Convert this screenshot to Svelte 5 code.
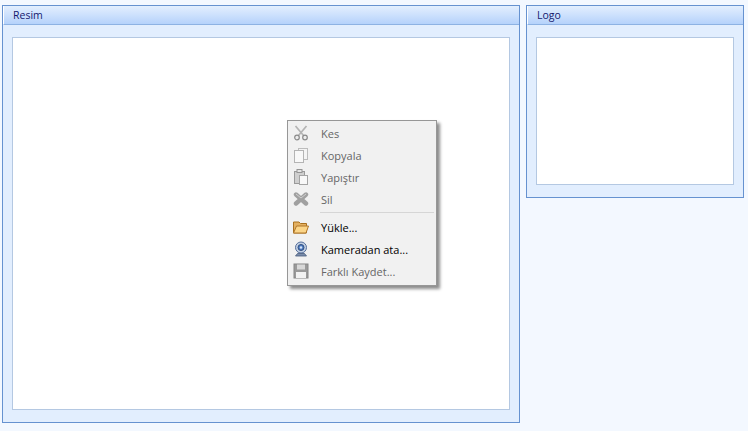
<script lang="ts">
  const items = [
    { label: "Kes", icon: "cut", disabled: true },
    { label: "Kopyala", icon: "copy", disabled: true },
    { label: "Yapıştır", icon: "paste", disabled: true },
    { label: "Sil", icon: "del", disabled: true },
    { sep: true },
    { label: "Yükle...", icon: "open", disabled: false },
    { label: "Kameradan ata...", icon: "cam", disabled: false },
    { label: "Farklı Kaydet...", icon: "save", disabled: true },
  ];
</script>

<div class="page">
  <section class="panel main">
    <header><span>Resim</span></header>
    <div class="body"><div class="picture"></div></div>
  </section>
  <section class="panel logo">
    <header><span>Logo</span></header>
    <div class="body"><div class="picture"></div></div>
  </section>

  <div class="menu">
    {#each items as item}
      {#if item.sep}
        <div class="sep"></div>
      {:else}
        <div class="item" class:disabled={item.disabled}>
          <span class="icon">
            <svg width="16" height="16" viewBox="0 0 16 16">
              {#if item.icon === "cut"}
                <path d="M2.5 1 L10.5 10.5 M13.5 1 L5.5 10.5" stroke="#b4b4b4" stroke-width="1.7" fill="none" />
                <circle cx="4" cy="12.5" r="2.3" fill="#ececec" stroke="#8a8a8a" stroke-width="1.2" />
                <circle cx="12" cy="12.5" r="2.3" fill="#ececec" stroke="#8a8a8a" stroke-width="1.2" />
              {:else if item.icon === "copy"}
                <rect x="5.5" y="1.5" width="9" height="11" fill="#f4f4f4" stroke="#bcbcbc" />
                <rect x="1.5" y="3.5" width="9" height="12" fill="#f8f8f8" stroke="#b4b4b4" />
              {:else if item.icon === "paste"}
                <rect x="1.5" y="2.5" width="10" height="12" fill="#cfcfcf" stroke="#9a9a9a" />
                <rect x="4" y="0.5" width="5" height="3" fill="#e4e4e4" stroke="#939393" />
                <rect x="6.5" y="6.5" width="8" height="9" fill="#f8f8f8" stroke="#a4a4a4" />
              {:else if item.icon === "del"}
                <path d="M3 3.5 L13 12.5 M13 3.5 L3 12.5" stroke="#a0a0a0" stroke-width="4.4" stroke-linecap="round" />
                <path d="M3 3 L8 7 L13 3" stroke="#cfcfcf" stroke-width="1" fill="none" />
              {:else if item.icon === "open"}
                <path d="M0.5 14 V3 H6 L7.5 4.5 H13.5 V14 Z" fill="#e3b061" stroke="#a9701e" />
                <path d="M0.5 14 L3.5 7 H15.5 L13 14 Z" fill="#fbd588" stroke="#b0762a" />
              {:else if item.icon === "cam"}
                <circle cx="8" cy="6.5" r="5.5" fill="#c2cfe2" stroke="#556f9c" />
                <circle cx="8" cy="6.5" r="3" fill="#4a79c0" stroke="#33507f" />
                <circle cx="8" cy="6.5" r="1.2" fill="#d6e4f8" />
                <path d="M2.5 15 L4.5 12.5 H11.5 L13.5 15 Z" fill="#7a8cab" stroke="#485c7c" stroke-width="0.8" />
              {:else if item.icon === "save"}
                <rect x="1" y="1" width="14" height="14" fill="#9a9a9a" stroke="#868686" />
                <rect x="4" y="1.5" width="8" height="5" fill="#d8d8d8" />
                <rect x="3" y="9" width="10" height="6" fill="#f2f2f2" />
              {/if}
            </svg>
          </span>
          <span class="label">{item.label}</span>
        </div>
      {/if}
    {/each}
  </div>
</div>

<style>
  :global(body) {
    margin: 0;
    background: #f3f8ff;
  }

  .page {
    position: relative;
    display: flex;
    align-items: flex-start;
    gap: 6px;
    width: 748px;
    height: 431px;
    box-sizing: border-box;
    padding: 5px 4px 0 2px;
    overflow: hidden;
    font-family: "Open Sans", "Noto Sans", sans-serif;
    font-size: 11px;
  }

  .panel {
    box-sizing: border-box;
    border: 1px solid #6692d0;
    background: #e2eefe;
    display: flex;
    flex-direction: column;
  }

  .main {
    width: 518px;
    height: 418px;
  }

  .logo {
    width: 218px;
    height: 193px;
  }

  header {
    box-sizing: border-box;
    height: 19px;
    padding-left: 9px;
    line-height: 18px;
    font-size: 10.5px;
    color: #15196e;
    border-left: 1px solid #fff;
    border-bottom: 1px solid #8db2e3;
    background: linear-gradient(180deg, #e3effe 0%, #cfe2fd 45%, #b5d2fb 100%);
  }

  .body {
    flex: 1;
    display: flex;
    padding: 12px 9px;
    min-height: 0;
    background: #e2eefe;
  }

  .picture {
    flex: 1;
    box-sizing: border-box;
    background: #fff;
    border: 1px solid #b4c8e2;
  }

  .menu {
    position: absolute;
    left: 287px;
    top: 120px;
    width: 150px;
    height: 166px;
    box-sizing: border-box;
    padding: 1px 2px;
    background: #f1f1f1;
    border: 1px solid #979797;
    box-shadow: 3px 3px 3px rgb(0 0 0 / 45%);
  }

  .item {
    display: flex;
    align-items: center;
    height: 22px;
    color: #000;
  }

  .item.disabled {
    color: #666;
  }

  .icon {
    display: flex;
    width: 31px;
    padding-left: 3px;
    box-sizing: border-box;
    flex-shrink: 0;
  }

  .label {
    white-space: nowrap;
  }

  .sep {
    height: 1px;
    margin: 2px 0 3px 30px;
    background: #d6d6d6;
  }
</style>
